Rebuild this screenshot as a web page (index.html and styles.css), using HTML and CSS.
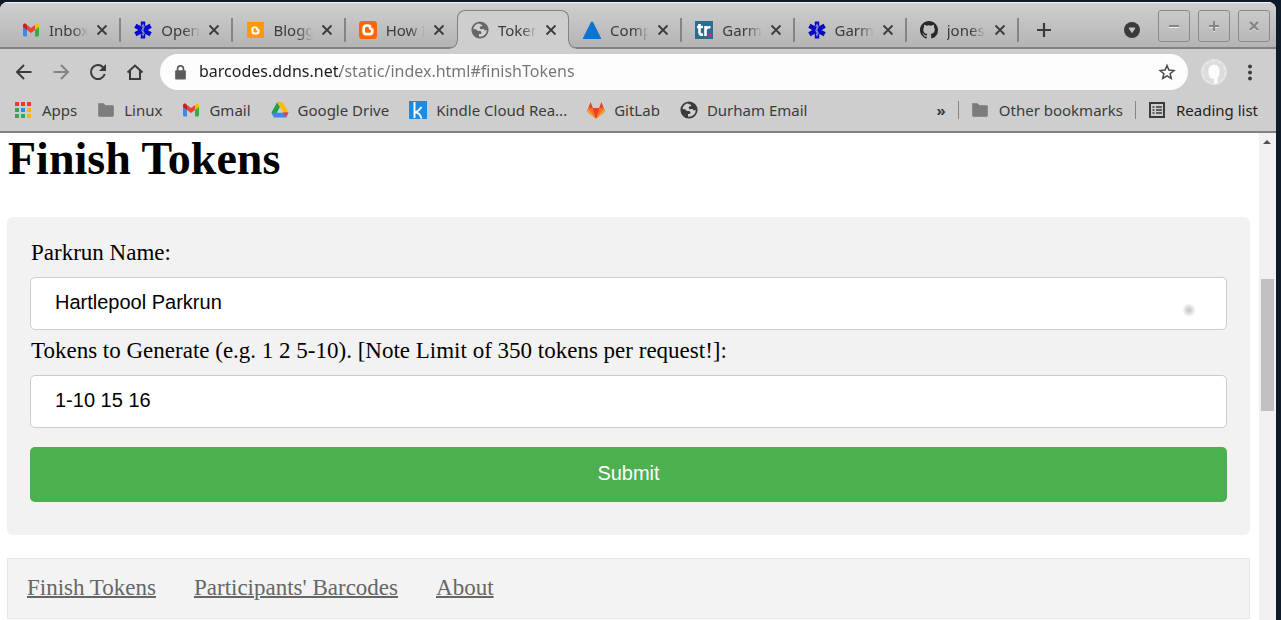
FILE: index.html
```html
<!DOCTYPE html>
<html lang="en">
<head>
<meta charset="utf-8">
<title>Finish Tokens</title>
<link rel="stylesheet" href="styles.css">
</head>
<body>
<svg class="defs" aria-hidden="true">
  <symbol id="gmail" viewBox="0 0 18 18">
    <path fill="#4285f4" d="M1 5v9q0 1.500 1.500 1.500H5V8z"/>
    <path fill="#34a853" d="M13 8v7.500h2.500Q17 15.500 17 14V5z"/>
    <path fill="#fbbc04" d="M13 4.500V9l4-3V4.500c0-2-2-2.500-3.200-1.500z"/>
    <path fill="#c5221f" d="M1 4.500V6l4 3V4.500L4.200 3C3 2 1 2.500 1 4.500z"/>
    <path fill="#ea4335" d="M5 9V4l4 3 4-3v5l-4 3z"/>
  </symbol>
  <symbol id="starlife" viewBox="0 0 20 20">
    <path stroke="#0808c8" stroke-width="5" d="M10 .5v19M1.500 5.200l17 9.600M18.500 5.200l-17 9.600"/>
    <path fill="none" stroke="#a8acd8" stroke-width="1" d="M10 3v14M8.500 6c0-1 3-1 3 .5S8.500 9 8.500 10.500s3 1.500 3 3-2 1.500-2.500 1.500"/>
  </symbol>
  <symbol id="bmark" viewBox="0 0 20 20">
    <path fill="none" stroke="#fff" stroke-width="3" stroke-linejoin="round" d="M8 5.200h2.200q2.200 0 2.200 2v.8q0 .9.900.9 1.500 0 1.500 1.500v1.200q0 2.900-2.900 2.900H8.100q-2.900 0-2.900-2.900V8.100Q5.200 5.200 8 5.200z"/>
  </symbol>
  <symbol id="globe" viewBox="0 0 18 18">
    <circle cx="9" cy="9" r="7.700" fill="#d2d2d2" stroke="currentColor" stroke-width="1.800"/>
    <path fill="currentColor" d="M1 8l4 .3 2 1.700h2.500l1 1.500-.5 1.500H8v3.500l-2 .2C2.500 15 1 12 1 8zM8 1.500l4 .2c3 1.300 4.500 4 4.700 7l-3 .8-1-1.500-3 .2-1.200-1.500 1-1.500h1.700L11 3.700 8.500 3z"/>
  </symbol>
  <symbol id="folder" viewBox="0 0 18 18">
    <path fill="#7c7c7c" stroke="#8b8b8b" d="M1.500 2.500h5l2 2h7q1 0 1 1v9q0 1-1 1h-13q-1 0-1-1z"/>
  </symbol>
  <symbol id="close" viewBox="0 0 12 12"><path stroke="currentColor" stroke-width="1.800" d="M1.500 1.500l9 9M10.500 1.500l-9 9"/></symbol>
</svg>

<div class="window">
  <header class="chrome">
    <div class="strip">
      <div class="tabs">
        <div class="tab"><svg class="ico"><use href="#gmail"/></svg><span class="name">Inbox</span><button class="x" aria-label="Close tab"><svg><use href="#close"/></svg></button></div>
        <div class="tab"><svg class="ico"><use href="#starlife"/></svg><span class="name">Open</span><button class="x" aria-label="Close tab"><svg><use href="#close"/></svg></button></div>
        <div class="tab"><svg class="ico" viewBox="0 0 18 18"><path fill="#fb9b0b" d="M1 1h17v16H1z"/><use href="#bmark" x="3" y="3" width="13" height="13"/></svg><span class="name">Blogg</span><button class="x" aria-label="Close tab"><svg><use href="#close"/></svg></button></div>
        <div class="tab last"><svg class="ico" viewBox="0 0 18 18"><rect width="18" height="18" rx="3" fill="#ff6500"/><use href="#bmark" width="18" height="18"/></svg><span class="name">How I</span><button class="x" aria-label="Close tab"><svg><use href="#close"/></svg></button></div>
        <div class="tab active"><svg class="ico grey"><use href="#globe"/></svg><span class="name">Token</span><button class="x" aria-label="Close tab"><svg><use href="#close"/></svg></button></div>
        <div class="tab"><svg class="ico" viewBox="0 0 18 18"><path fill="#0a74d4" d="M8 1q1-1 2 0l8.500 17h-19z"/></svg><span class="name">Comp</span><button class="x" aria-label="Close tab"><svg><use href="#close"/></svg></button></div>
        <div class="tab"><svg class="ico" viewBox="0 0 18 18"><path fill="#2b6d90" d="M0 0h18v18H0z"/><path fill="none" stroke="#fff" stroke-width="2.600" d="M4.500 3v8.500q0 2.500 3.500 2M2 6h6M10.500 15V5M10.500 8.500q1-2.500 5-2.200"/><circle cx="15" cy="14" r="1.700" fill="#f0148c"/></svg><span class="name">Garm</span><button class="x" aria-label="Close tab"><svg><use href="#close"/></svg></button></div>
        <div class="tab"><svg class="ico"><use href="#starlife"/></svg><span class="name">Garm</span><button class="x" aria-label="Close tab"><svg><use href="#close"/></svg></button></div>
        <div class="tab"><svg class="ico" viewBox="0 0 16 16"><path fill="#24292e" d="M8 0C3.580 0 0 3.580 0 8c0 3.540 2.290 6.530 5.470 7.590.4.070.55-.17.55-.38 0-.19-.01-.82-.01-1.490-2.010.37-2.530-.49-2.690-.94-.09-.23-.48-.94-.82-1.130-.28-.15-.68-.52-.01-.53.63-.01 1.080.58 1.230.82.72 1.210 1.870.87 2.330.66.07-.52.28-.87.51-1.070-1.780-.2-3.640-.89-3.640-3.950 0-.87.31-1.590.82-2.150-.08-.2-.36-1.020.08-2.120 0 0 .67-.21 2.200.82a7.600 7.600 0 0 1 4 0c1.530-1.040 2.200-.82 2.200-.82.44 1.100.16 1.920.08 2.120.51.56.82 1.270.82 2.150 0 3.070-1.870 3.750-3.650 3.950.29.25.54.73.54 1.480 0 1.070-.01 1.930-.01 2.200 0 .21.15.46.55.38A8.010 8.010 0 0 0 16 8c0-4.420-3.580-8-8-8z"/></svg><span class="name">jones</span><button class="x" aria-label="Close tab"><svg><use href="#close"/></svg></button></div>
      </div>
      <button class="plus" aria-label="New tab"><svg viewBox="0 0 14 14"><path stroke="#3b3b3b" stroke-width="2.200" d="M7 0v14M0 7h14"/></svg></button>
      <div class="controls">
        <button class="search" aria-label="Search tabs"><svg viewBox="0 0 16 16"><circle cx="8" cy="8" r="8" fill="#3b3b3b"/><path fill="#c4c4c4" stroke="#c4c4c4" stroke-width="1" d="M5 6h6l-3 4.500z"/></svg></button>
        <button class="wm" aria-label="Minimise"><svg viewBox="0 0 14 14"><path stroke="#eee" stroke-width="2" d="M2 8h10"/><path stroke="#858585" stroke-width="2" d="M2 7h10"/></svg></button>
        <button class="wm" aria-label="Maximise"><svg viewBox="0 0 14 14"><path stroke="#e2e2e2" stroke-width="2" d="M2 8h10M7 3v10"/><path stroke="#858585" stroke-width="2" d="M2 7h10M7 2v10"/></svg></button>
        <button class="wm" aria-label="Close window"><svg viewBox="0 0 14 14"><path stroke="#e2e2e2" stroke-width="2" d="M3 4l8 8M11 4l-8 8"/><path stroke="#858585" stroke-width="2.400" d="M3 3l8 8M11 3l-8 8"/></svg></button>
      </div>
    </div>

    <div class="toolbar">
      <button class="nav-btn" aria-label="Back"><svg viewBox="0 0 18 18"><path d="M16.500 9H2.500M9 2L2 9l7 7"/></svg></button>
      <button class="nav-btn off" aria-label="Forward"><svg viewBox="0 0 18 18"><path d="M1.500 9h14M9 2l7 7-7 7"/></svg></button>
      <button class="nav-btn" aria-label="Reload"><svg viewBox="0 0 18 18"><path d="M15.700 11A7 7 0 1 1 14 4.200L16 6"/><path class="solid" d="M17 1v7h-7z"/></svg></button>
      <button class="nav-btn" aria-label="Home"><svg viewBox="0 0 18 18"><path d="M1.500 9.500L9 2.500l7.500 7M4 8v8h10V8"/></svg></button>
      <div class="omnibox">
        <svg class="lock" viewBox="0 0 12 14"><rect x="1" y="5" width="10" height="8.500" rx="1" fill="#5a5c60"/><path fill="none" stroke="#5a5c60" stroke-width="1.600" d="M3.300 6V3.600a2.700 2.700 0 0 1 5.400 0V6"/></svg>
        <input class="url" type="text" aria-label="Address" value="barcodes.ddns.net/static/index.html#finishTokens">
        <button class="star" aria-label="Bookmark this page"><svg viewBox="0 0 18 18"><path fill="none" stroke="#4a4a4a" stroke-width="1.500" d="M9 2.500l1.900 4.600 5 .4-3.800 3.200 1.200 4.800L9 12.900l-4.300 2.600 1.200-4.800-3.800-3.200 5-.4z"/></svg></button>
      </div>
      <button class="avatar" aria-label="Profile"><svg viewBox="0 0 26 26"><circle cx="13" cy="13" r="12.500" fill="#dcdcdc" stroke="#e8e8e8"/><circle cx="13" cy="13" r="11" fill="none" stroke="#f1f1f1" stroke-dasharray="4 3"/><path fill="#fbfcfd" stroke="#d3dbe2" stroke-width=".7" d="M7 12c0-9 12-9 12 0 0 4-1 6-2 7v4l2 1q-6 2-8 1c1-1 2-2 1.500-5C9 21 7 17 7 12z"/></svg></button>
      <button class="dots" aria-label="Menu"><svg viewBox="0 0 6 18"><g fill="#3b3b3b"><circle cx="3" cy="3.500" r="1.900"/><circle cx="3" cy="9.500" r="1.900"/><circle cx="3" cy="15.500" r="1.900"/></g></svg></button>
    </div>

    <nav class="bookmarks" aria-label="Bookmarks">
      <a href="#"><svg class="ico" viewBox="0 0 18 18"><path fill="#ea3a33" d="M0 1h4v4H0zM6 1h4v4H6zM12 1h4v4h-4z"/><path fill="#34a853" d="M0 7h4v4H0zM0 13h4v4H0z"/><path fill="#2a8cf0" d="M6 7h4v4H6z"/><path fill="#34a853" d="M6 13h4v4H6z"/><path fill="#fbb40a" d="M12 7h4v4h-4zM12 13h4v4h-4z"/></svg>Apps</a>
      <a href="#"><svg class="ico"><use href="#folder"/></svg>Linux</a>
      <a href="#"><svg class="ico"><use href="#gmail"/></svg>Gmail</a>
      <a href="#"><svg class="ico" viewBox="0 0 18 18"><path fill="#1ea050" d="M6 1.500h3.200L12 6.300 9 6 3.500 16.500.5 11.500z"/><path fill="#fbbc04" d="M6 1.500h6l5.500 10h-5.300z"/><path fill="#4285f4" d="M3 16.500L.5 12l5.500-.5h11.500l-2.500 5z"/><path fill="#ea4335" d="M12.200 11.500h5.300l-2.500 5z"/><path fill="#cecece" d="M9 6.500l3 5H6z"/></svg>Google Drive</a>
      <a href="#"><svg class="ico" viewBox="0 0 18 18"><path fill="#1a8ce6" d="M0 0h18v18H0z"/><path fill="none" stroke="#fff" stroke-width="1.900" d="M5.500 1v16M12.500 6Q10 10 6 11.500 10.500 11 12.500 17.500"/></svg>Kindle Cloud Rea...</a>
      <a href="#"><svg class="ico" viewBox="0 0 18 18"><path fill="#e24329" d="M3.500 1L6 7h6l2.500-6L18 10.500 9 17.500 0 10.500z"/><path fill="#fc6d26" d="M2 7h4l3 10.500L0 10.500zM16 7h-4L9 17.500l9-7z"/><path fill="#fca326" d="M1 8l-1 2.500 9 7zM17 8l1 2.500-9 7z"/><path fill="#e24329" d="M6 7h6L9 17.500z"/></svg>GitLab</a>
      <a href="#"><svg class="ico"><use href="#globe"/></svg>Durham Email</a>
      <span class="right">
        <button class="more" aria-label="More bookmarks">»</button>
        <a class="sep" href="#"><svg class="ico"><use href="#folder"/></svg>Other bookmarks</a>
        <a class="sep dark" href="#"><svg class="ico" viewBox="0 0 18 18"><g fill="none" stroke="#3b3b3b" stroke-width="2"><path d="M2 2h14v14H2z"/><path stroke-width="1.500" d="M4.500 6h2M8 6h6M4.500 9h2M8 9h6M4.500 12h2M8 12h6"/></g></svg>Reading list</a>
      </span>
    </nav>
  </header>

  <div class="viewport">
    <main class="page">
      <h1>Finish Tokens</h1>
      <form class="card">
        <label for="parkrun">Parkrun Name:</label>
        <div class="field"><input id="parkrun" type="text" value="Hartlepool Parkrun"><span class="smudge"></span></div>
        <label for="tokens">Tokens to Generate (e.g. 1 2 5-10). [Note Limit of 350 tokens per request!]:</label>
        <div class="field"><input id="tokens" type="text" value="1-10 15 16"></div>
        <button class="submit" type="button">Submit</button>
      </form>
      <nav class="links">
        <a href="#finishTokens">Finish Tokens</a>
        <a href="#barcodes">Participants' Barcodes</a>
        <a href="#about">About</a>
      </nav>
    </main>
    <div class="scrollbar"><svg viewBox="0 0 16 16"><path fill="#505050" d="M4 11l4-4 4 4z"/></svg><div class="thumb"></div></div>
  </div>
</div>
</body>
</html>
```
FILE: styles.css
```css
* { box-sizing: border-box; }
body {
  margin: 0;
  height: 100vh;
  padding: 2px 5px 0 0;
  overflow: hidden;
  background: #0e1a29;
}
button { border: 0; padding: 0; background: none; display: flex; align-items: center; justify-content: center; color: inherit; }
.defs { position: absolute; width: 0; height: 0; }
.ico { width: 18px; height: 18px; flex: none; }
.window { height: 100%; display: flex; flex-direction: column; border-radius: 8px 8px 0 0; overflow: hidden; background: #fff; }
.chrome { flex: none; background: #cecece; color: #3b3b3b; font: 15px/20px "Noto Sans", sans-serif; border-bottom: 2px solid #828282; }

.strip {
  height: 47px;
  display: flex;
  padding: 7px 6px 0 8px;
  border-top: 1px solid #f4f4f4;
  border-bottom: 2px solid #828282;
  background: linear-gradient(#cfcfcf, #b4b4b4);
}
.tabs { flex: 1; min-width: 0; display: flex; height: 39px; }
.tab { flex: 1 1 0; min-width: 0; display: flex; align-items: center; position: relative; padding: 0 12px 0 14px; }
.tab::after { content: ""; position: absolute; right: -1px; top: 8px; width: 2px; height: 24px; background: #858585; }
.tab .ico { margin-right: 9px; }
.name {
  flex: 1;
  min-width: 0;
  overflow: hidden;
  white-space: nowrap;
  padding-top: 1px;
  margin-right: 8px;
  -webkit-mask-image: linear-gradient(to right, #000 60%, transparent);
  mask-image: linear-gradient(to right, #000 60%, transparent);
}
.x, .x svg { width: 12px; height: 12px; flex: none; }
.tab.last::after { display: none; }
.active { background: #cecece; border: 1px solid #828282; border-bottom: 0; border-radius: 8px 8px 0 0; padding: 0 11px 1px 13px; z-index: 1; }
.active::before, .tab.active::after {
  content: "";
  position: absolute;
  top: auto;
  bottom: 0;
  width: 8px;
  height: 8px;
  background: radial-gradient(circle at 0 0, transparent 6px, #828282 7px, #cecece 8px);
}
.active::before { left: -8px; }
.tab.active::after { right: -8px; background: radial-gradient(circle at 100% 0, transparent 6px, #828282 7px, #cecece 8px); }
.grey { color: #65686b; }
.plus { height: 39px; width: 52px; flex: none; }
.plus svg { width: 14px; height: 14px; }
.controls { display: flex; gap: 8px; width: 200px; flex: none; justify-content: flex-end; }
.search { width: 16px; height: 39px; margin-right: 10px; }
.search svg { width: 16px; height: 16px; }
.wm { width: 32px; height: 32px; border: 1px solid #8a8a8a; border-radius: 3px; }
.wm svg { width: 14px; height: 14px; }

.toolbar { display: flex; align-items: center; padding: 5px 23px 0 5px; }
.nav-btn { width: 37px; height: 36px; flex: none; }
.nav-btn svg { width: 18px; height: 18px; fill: none; stroke: #3b3b3b; stroke-width: 2; }
.nav-btn .solid { fill: #3b3b3b; stroke: none; }
.off { opacity: .5; }
.omnibox { flex: 1; height: 36px; margin: 0 13px 0 7px; padding: 0 12px 0 14px; display: flex; align-items: center; gap: 12px; border-radius: 18px; background: #fdfdfd; }
.lock { width: 13px; height: 15px; flex: none; }
.url {
  flex: 1;
  min-width: 0;
  border: 0;
  padding: 0 0 2px;
  outline: 0;
  height: 24px;
  font: 16px/22px "Noto Sans", sans-serif;
  background: linear-gradient(to right, #1c1c1c 141px, #747474 141px);
  -webkit-background-clip: text;
  background-clip: text;
  -webkit-text-fill-color: transparent;
}
.star svg { width: 18px; height: 18px; }
.avatar, .avatar svg { width: 26px; height: 26px; }
.dots { margin-left: 20px; }
.dots svg { width: 6px; height: 18px; }

.bookmarks { height: 41px; display: flex; align-items: center; gap: 20px; padding: 0 18px 2px 15px; white-space: nowrap; }
.bookmarks a { display: flex; align-items: center; gap: 9px; color: inherit; text-decoration: none; }
.right { display: flex; align-items: center; gap: 12px; margin-left: auto; }
.bookmarks .sep { border-left: 1px solid #858585; padding-left: 12px; height: 18px; gap: 10px; }
.bookmarks .dark { color: #1f1f1f; }
.more { font: bold 15px/20px "Noto Sans", sans-serif; }

.viewport { flex: 1; min-height: 0; display: flex; }
.page { flex: 1; padding: 0 9px 0 7px; font: 23px/26px "Liberation Serif", serif; color: #000; overflow: hidden; }
h1 { margin: 0 0 32px; font-size: 46px; line-height: 52px; padding-left: 1px; }
.card { background: #f2f2f2; border-radius: 6px; padding: 23px 23px 33px; }
.card label { display: block; padding: 0 0 11px 1px; }
.field { position: relative; margin-bottom: 8px; }
.field input {
  display: block;
  width: 100%;
  height: 53px;
  border: 1px solid #ccc;
  border-radius: 5px;
  padding: 0 24px 2px;
  font: 20px/24px "Liberation Sans", sans-serif;
  color: #000;
  background: #fff;
}
.smudge { position: absolute; right: 31px; top: 26px; width: 14px; height: 14px; background: radial-gradient(circle, #c8c8c8 10%, #fff 70%); }
.submit { width: 100%; height: 55px; margin-top: 19px; padding-bottom: 3px; border-radius: 5px; background: #4caf50; color: #fff; font: 20px/24px "Liberation Sans", sans-serif; }
.links { display: flex; gap: 38px; margin-top: 23px; padding: 16px 19px 17px; border: 1px solid #e7e7e7; background: #f3f3f3; }
.links a { color: #666; text-decoration-thickness: 2px; }
.scrollbar { width: 17px; background: #f1f1f1; position: relative; }
.scrollbar svg { display: block; width: 16px; height: 16px; }
.thumb { position: absolute; top: 30%; left: 2px; right: 2px; height: 27%; background: #c1c1c1; }
```
